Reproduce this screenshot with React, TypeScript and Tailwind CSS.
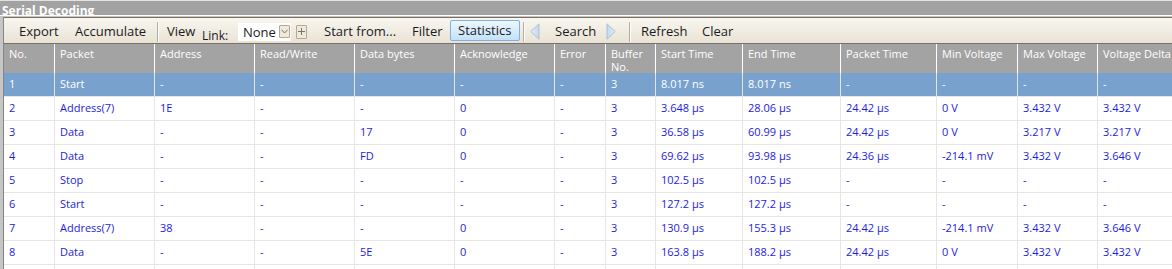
import React from "react";

const headers = [
  "No.",
  "Packet",
  "Address",
  "Read/Write",
  "Data bytes",
  "Acknowledge",
  "Error",
  "Buffer No.",
  "Start Time",
  "End Time",
  "Packet Time",
  "Min Voltage",
  "Max Voltage",
  "Voltage Delta",
];

const rows: string[][] = [
  ["1", "Start", "-", "-", "-", "-", "-", "3", "8.017 ns", "8.017 ns", "-", "-", "-", "-"],
  ["2", "Address(7)", "1E", "-", "-", "0", "-", "3", "3.648 µs", "28.06 µs", "24.42 µs", "0 V", "3.432 V", "3.432 V"],
  ["3", "Data", "-", "-", "17", "0", "-", "3", "36.58 µs", "60.99 µs", "24.42 µs", "0 V", "3.217 V", "3.217 V"],
  ["4", "Data", "-", "-", "FD", "0", "-", "3", "69.62 µs", "93.98 µs", "24.36 µs", "-214.1 mV", "3.432 V", "3.646 V"],
  ["5", "Stop", "-", "-", "-", "-", "-", "3", "102.5 µs", "102.5 µs", "-", "-", "-", "-"],
  ["6", "Start", "-", "-", "-", "-", "-", "3", "127.2 µs", "127.2 µs", "-", "-", "-", "-"],
  ["7", "Address(7)", "38", "-", "-", "0", "-", "3", "130.9 µs", "155.3 µs", "24.42 µs", "-214.1 mV", "3.432 V", "3.646 V"],
  ["8", "Data", "-", "-", "5E", "0", "-", "3", "163.8 µs", "188.2 µs", "24.42 µs", "0 V", "3.432 V", "3.432 V"],
];

const gridCols =
  "grid grid-cols-[51px_100px_100px_100px_100px_100px_51px_50px_87px_98px_96px_81px_80px_140px]";

function Sep() {
  return <div className="h-[20px] w-[2px] shrink-0 border-l border-[#b4ab9b] border-r border-r-white" />;
}

function LeftArrow() {
  return (
    <svg width="10" height="17" viewBox="0 0 10 17" className="shrink-0">
      <defs>
        <linearGradient id="la" x1="0" y1="0" x2="1" y2="0">
          <stop offset="0" stopColor="#e4eef8" />
          <stop offset="1" stopColor="#c4d7ea" />
        </linearGradient>
      </defs>
      <polygon points="9,0.8 0.8,8.5 9,16.2" fill="url(#la)" stroke="#a9c0d8" strokeWidth="1" />
    </svg>
  );
}

function RightArrow() {
  return (
    <svg width="10" height="17" viewBox="0 0 10 17" className="shrink-0">
      <defs>
        <linearGradient id="ra" x1="0" y1="0" x2="1" y2="0">
          <stop offset="0" stopColor="#c4d7ea" />
          <stop offset="1" stopColor="#e4eef8" />
        </linearGradient>
      </defs>
      <polygon points="1,0.8 9.2,8.5 1,16.2" fill="url(#ra)" stroke="#a9c0d8" strokeWidth="1" />
    </svg>
  );
}

export default function App() {
  return (
    <div className="w-[1172px] h-[269px] overflow-hidden bg-white font-['Open_Sans',sans-serif]">
      {/* Title bar */}
      <div className="h-[15px] overflow-hidden bg-[#a2a2a2] border-t border-[#e2e2e2]">
        <div className="pl-[2px] pt-[2px] text-[12px] leading-[16px] font-bold text-white whitespace-nowrap">
          Serial Decoding
        </div>
      </div>
      <div className="h-[2px] border-t border-white bg-[#c9c6c0]" />

      <div className="flex">
        {/* left strip */}
        <div className="w-[4px] shrink-0 flex">
          <div className="w-[3px] bg-[#c6c6c6]" />
          <div className="w-[1px] bg-[#858585]" />
        </div>

        <div className="flex-1 min-w-0">
          {/* Toolbar */}
          <div className="h-[27px] border-t border-b border-[#7a7064] bg-gradient-to-b from-[#f8f6f0] to-[#e9e3d5] flex items-center pt-[2px] text-[13px] text-[#1b1b1b] whitespace-nowrap">
            <span className="ml-[15px] w-[56px] shrink-0">Export</span>
            <span className="w-[82px] shrink-0">Accumulate</span>
            <Sep />
            <span className="ml-[8px] w-[35px] shrink-0">View</span>
            <span className="w-[36px] shrink-0 text-[12px] translate-y-[4px]">Link:</span>
            <div className="w-[53px] h-[18px] shrink-0 bg-white flex items-center justify-between pl-[5px] pr-[1px]">
              <span className="leading-[16px]">None</span>
              <div className="w-[11px] h-[13px] border border-[#b3a995] bg-[#efe9dc] rounded-[1px] flex items-center justify-center">
                <svg width="7" height="5" viewBox="0 0 7 5">
                  <polyline points="0.5,0.8 3.5,4 6.5,0.8" fill="none" stroke="#7a7468" strokeWidth="1" />
                </svg>
              </div>
            </div>
            <div className="ml-[5px] w-[11px] h-[14px] shrink-0 border border-[#b3a995] bg-[#efe9dc] rounded-[1px] flex items-center justify-center">
              <svg width="7" height="7" viewBox="0 0 7 7">
                <line x1="3.5" y1="0" x2="3.5" y2="7" stroke="#7a7468" strokeWidth="1" />
                <line x1="0" y1="3.5" x2="7" y2="3.5" stroke="#7a7468" strokeWidth="1" />
              </svg>
            </div>
            <span className="ml-[17px] w-[88px] shrink-0">Start from...</span>
            <span className="w-[38px] shrink-0">Filter</span>
            <div className="w-[70px] h-[21px] shrink-0 border border-[#7cb2e6] rounded-[2px] bg-gradient-to-b from-[#eef7fd] to-[#c3e1f8] flex items-center pl-[7px] -translate-y-[1px]">
              Statistics
            </div>
            <div className="ml-[3px]">
              <Sep />
            </div>
            <div className="ml-[5px] w-[10px] shrink-0 flex">
              <LeftArrow />
            </div>
            <span className="ml-[15px] w-[51px] shrink-0">Search</span>
            <div className="w-[13px] shrink-0 flex">
              <RightArrow />
            </div>
            <div className="ml-[10px]">
              <Sep />
            </div>
            <span className="ml-[10px] w-[61px] shrink-0">Refresh</span>
            <span className="shrink-0">Clear</span>
          </div>

          {/* Header */}
          <div className={`${gridCols} h-[29px] bg-[#a3a3a3] text-[11px] leading-[13px] text-white`}>
            {headers.map((h, i) => (
              <div key={i} className="border-r border-white pl-[5px] pt-[3px] overflow-hidden">
                {h === "Buffer No." ? (
                  <>
                    Buffer
                    <br />
                    No.
                  </>
                ) : (
                  <span className="whitespace-nowrap">{h}</span>
                )}
              </div>
            ))}
          </div>

          {/* Rows */}
          {rows.map((r, ri) => (
            <div
              key={ri}
              className={`${gridCols} h-[24px] text-[11px] ${
                ri === 0 ? "bg-[#78a2cd] text-white" : "bg-white text-[#1c1ce6]"
              }`}
            >
              {r.map((c, ci) => (
                <div
                  key={ci}
                  className={`flex items-center pl-[5px] whitespace-nowrap overflow-hidden border-b border-r ${
                    ri === 0 ? "border-b-[#e8e8e8] border-r-[#e4e4e4]" : "border-[#e6e6e6]"
                  }`}
                >
                  {c}
                </div>
              ))}
            </div>
          ))}
          <div className={`${gridCols} h-[24px]`}>
            {headers.map((_, i) => (
              <div key={i} className="border-r border-[#e6e6e6]" />
            ))}
          </div>
        </div>
      </div>
    </div>
  );
}
